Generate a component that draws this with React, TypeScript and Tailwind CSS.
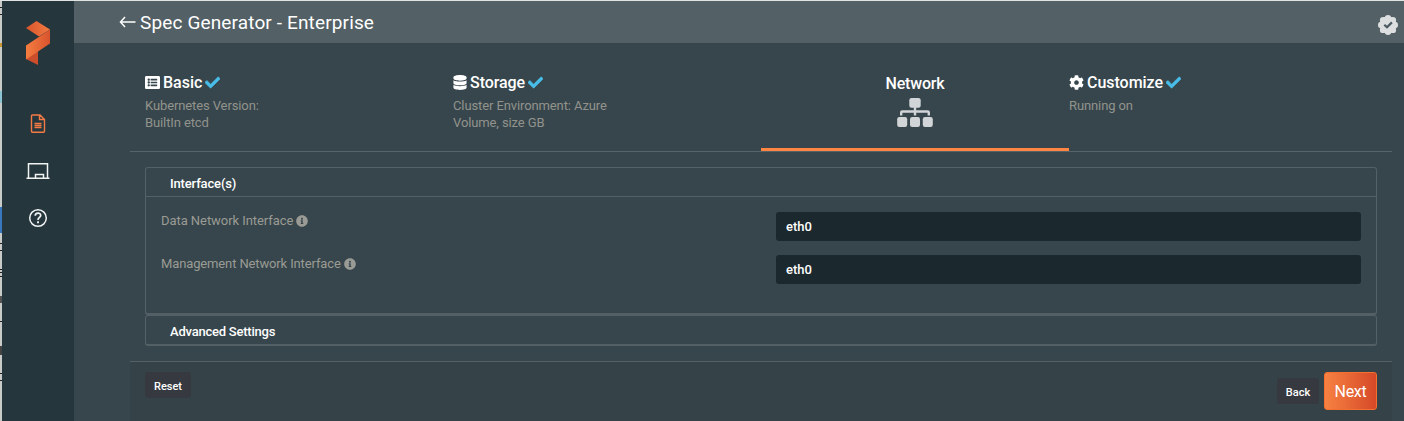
import type { ReactNode } from "react";
import { FaCheck, FaCog, FaDatabase, FaInfoCircle, FaListAlt } from "react-icons/fa";

function Logo() {
  return (
    <svg width="24" height="44" viewBox="0 0 24 44" className="mt-[20px]">
      <defs>
        <linearGradient id="foldTop" x1="0" x2="1" y1="0" y2="0">
          <stop offset="0" stopColor="#d9552d" />
          <stop offset="1" stopColor="#f27a40" />
        </linearGradient>
        <linearGradient id="foldMid" x1="0" x2="1" y1="0" y2="0">
          <stop offset="0" stopColor="#f57d40" />
          <stop offset="1" stopColor="#d9532d" />
        </linearGradient>
      </defs>
      <path d="M0 7 10.5 0 24 8.5 13 15.5Z" fill="url(#foldTop)" />
      <path d="M0 38 12 29V44Z" fill="#cc4d2b" />
      <path d="M0 24.5 24 8.5V22.500L0 38.500Z" fill="url(#foldMid)" />
    </svg>
  );
}

function DocIcon() {
  return (
    <svg width="16" height="20" viewBox="0 0 16 20" fill="none" stroke="#f47b45" strokeWidth="1.4">
      <path d="M2.500 1H10l4.500 4.500V17.300Q14.500 18.300 13.500 18.300H2.500Q1.500 18.300 1.500 17.300V2Q1.500 1 2.500 1ZM9.500 1V5.500H14.500" />
      <path d="M4.500 9.500H11.500M4.500 11.500H11.500M4.500 13.500H11.500" />
    </svg>
  );
}

function BoardIcon() {
  return (
    <svg width="24" height="18" viewBox="0 0 24 18" fill="none" stroke="#f1f3f3" strokeWidth="1.500">
      <path d="M2.500 16V1.750H21.500V16M.5 16.250H23.500M9.500 16V12.500H17.500V16" />
    </svg>
  );
}

function HelpIcon() {
  return (
    <svg width="20" height="20" viewBox="0 0 20 20" fill="none" stroke="#f1f3f3" strokeWidth="1.500">
      <circle cx="10" cy="10" r="8.300" />
      <path d="M7.200 7.800C7.300 4.200 12.700 4.200 12.700 7.500 12.700 9.500 10 9.500 10 12" strokeWidth="1.700" />
      <path d="M10 13.300V15.200" strokeWidth="1.900" />
    </svg>
  );
}

function NetworkIcon() {
  return (
    <svg width="36" height="30" viewBox="0 0 36 30" fill="#d2d5d7" className="text-[#d2d5d7]">
      <rect x="12.300" y="0" width="11.400" height="9.800" rx="2.200" />
      <rect x="0.200" y="19" width="10" height="10" rx="2.200" />
      <rect x="13" y="19" width="10" height="10" rx="2.200" />
      <rect x="25.800" y="19" width="10" height="10" rx="2.200" />
      <path d="M18 9V17.500M4.200 17.500V14.500Q4.200 13.500 5.200 13.500H30.800Q31.800 13.500 31.800 14.500V17.500" fill="none" stroke="currentColor" strokeWidth="2.400" />
    </svg>
  );
}

function VerifiedIcon() {
  return (
    <svg width="20" height="20" viewBox="0 0 20 20">
      <g fill="#dcdedf">
        <circle cx="10" cy="10" r="8.400" />
        <circle cx="10" cy="3.200" r="3.200" /><circle cx="14.900" cy="5.100" r="3.200" />
        <circle cx="16.800" cy="10" r="3.200" /><circle cx="14.900" cy="14.900" r="3.200" />
        <circle cx="10" cy="16.800" r="3.200" /><circle cx="5.100" cy="14.900" r="3.200" />
        <circle cx="3.200" cy="10" r="3.200" /><circle cx="5.100" cy="5.100" r="3.200" />
      </g>
      <path d="M6.300 9.700 9 12.200 13.900 7.400" fill="none" stroke="#4b5a60" strokeWidth="2.200" />
    </svg>
  );
}

type StepProps = { icon: ReactNode; title: string; titleClass: string; children: ReactNode };

function Step({ icon, title, titleClass, children }: StepProps) {
  return (
    <div className="w-[308px] pt-[30px]">
      <div className="flex h-5 items-center text-white">
        {icon}
        <span className={`whitespace-nowrap text-[16px] font-medium leading-5 ${titleClass}`}>{title}</span>
        <FaCheck className="-mt-px ml-[3px] size-[15px] stroke-[#48bde8] stroke-[20px] text-[#48bde8]" />
      </div>
      <div className="mt-[4px] text-[13px] leading-[17px] tracking-[-0.11px] text-[#92938d]">{children}</div>
    </div>
  );
}

function Field({ label, labelClass }: { label: string; labelClass: string }) {
  return (
    <div className="flex h-[29px]">
      <div className="flex h-[17px] w-[615px] items-center text-[13px] leading-[17px] text-[#9a9b94]">
        <span className={labelClass}>{label}</span>
        <FaInfoCircle className="ml-[3px] size-3" />
      </div>
      <div className="h-[29px] w-[585px] rounded-[3px] bg-[#1b282e] pl-[10px] text-[13px] font-medium leading-[29px] text-white">
        eth0
      </div>
    </div>
  );
}

export default function App() {
  return (
    <div className="flex h-[421px] w-[1404px] flex-col overflow-hidden border-t border-[#dfe4e3] bg-[#37464c] font-['Roboto','Liberation_Sans',sans-serif]">
      <div className="flex flex-1">
        <div className="flex w-[2px] flex-col bg-[#c8cbc8]">
          <div className="mt-[6px] h-px bg-[#222]" />
          <div className="mt-[6px] h-px bg-[#222]" />
          <div className="mt-[28px] h-[4px] bg-[#c99936]" />
          <div className="mt-[44px] h-[12px] bg-[#8dc4d3]" />
          <div className="mt-[104px] h-[26px] bg-[#3877bd]" />
          <div className="mt-[10px] h-px bg-[#222]" />
          <div className="mt-[6px] h-px bg-[#222]" />
          <div className="mt-[18px] h-px bg-[#222]" />
          <div className="mt-[2px] h-px bg-[#222]" />
          <div className="mt-[3px] h-px bg-[#222]" />
          <div className="mt-[19px] h-[7px] bg-[#555]" />
          <div className="mt-[18px] h-px bg-[#222]" />
          <div className="mt-[24px] h-[9px] bg-[#444]" />
          <div className="mt-[18px] h-px bg-[#222]" />
          <div className="mt-[6px] h-px bg-[#222]" />
        </div>
        <nav className="flex w-[72px] flex-col items-center bg-[#25363d]">
          <Logo />
          <div className="mt-[49px] h-5"><DocIcon /></div>
          <div className="mt-[28px] h-[18px]"><BoardIcon /></div>
          <div className="mt-[28px] h-5"><HelpIcon /></div>
        </nav>
        <main className="flex w-[1330px] flex-col">
          <header className="flex h-[42px] items-center bg-[#536065] pl-[45px] pr-[6px] text-white">
            <svg width="17" height="12" viewBox="0 0 17 12" fill="none" stroke="currentColor" strokeWidth="1.500">
              <path d="M16.500 6H1.500M6 1 1.500 6 6 11" />
            </svg>
            <h1 className="ml-1 mt-[2px] flex-1 text-[19px] leading-6 tracking-[0.14px]">Spec Generator - Enterprise</h1>
            <div className="mt-[5px]"><VerifiedIcon /></div>
          </header>
          <div className="ml-[56px] w-[1262px]">
            <div className="flex h-[109px] border-b border-[#566369] pl-[15px]">
              <Step icon={<FaListAlt className="-mt-px mr-[3px] size-[15px]" />} title="Basic" titleClass="tracking-[-0.02px]">
                Kubernetes Version:<br />BuiltIn etcd
              </Step>
              <Step icon={<FaDatabase className="-mt-px mr-[3px] h-[15px] w-[14px]" />} title="Storage" titleClass="tracking-[-0.06px]">
                Cluster Environment: Azure<br />Volume, size GB
              </Step>
              <div className="flex h-[108px] w-[308px] flex-col items-center border-b-[3px] border-[#ff8542] pt-[31px] text-white">
                <span className="mb-[4px] text-[16px] font-medium leading-5 tracking-[-0.2px]">Network</span>
                <NetworkIcon />
              </div>
              <Step icon={<FaCog className="-mt-px mr-[3px] size-[15px]" />} title="Customize" titleClass="tracking-[-0.03px]">
                Running on
              </Step>
            </div>
            <div className="mx-[15px] pt-[15px]">
              <section className="h-[148px] rounded-[3px] border border-b-2 border-[#536167]">
                <h2 className="h-[29px] border-b border-[#536167] pl-6 pt-[2px] text-[13px] font-medium leading-[28px] tracking-[-0.15px] text-white">Interface(s)</h2>
                <div className="flex flex-col gap-[14px] pl-[15px] pt-[15px]">
                  <Field label="Data Network Interface" labelClass="tracking-[-0.06px]" />
                  <Field label="Management Network Interface" labelClass="tracking-[-0.13px]" />
                </div>
              </section>
              <section className="h-[31px] rounded-[3px] border border-b-2 border-[#536167] pl-6 pt-[2px] text-[13px] font-medium leading-[28px] tracking-[-0.22px] text-white">
                Advanced Settings
              </section>
            </div>
            <footer className="mt-[15px] flex h-[60px] items-start border-t border-[#536167] bg-[#354349] px-[15px] pt-[10px] text-[11px] font-medium text-white">
              <button className="h-[26px] w-[46px] rounded-[3px] bg-[#363940] pt-[4px]">Reset</button>
              <button className="ml-auto mt-[6px] h-[26px] w-[42px] rounded-[3px] bg-[#363940] pt-[4px]">Back</button>
              <button className="ml-[5px] h-[38px] w-[53px] rounded-[3px] border border-[#f4702f] bg-linear-to-r from-[#f78142] to-[#d54828] pt-px text-[16px] font-normal tracking-[-0.3px]">Next</button>
            </footer>
          </div>
        </main>
      </div>
    </div>
  );
}
